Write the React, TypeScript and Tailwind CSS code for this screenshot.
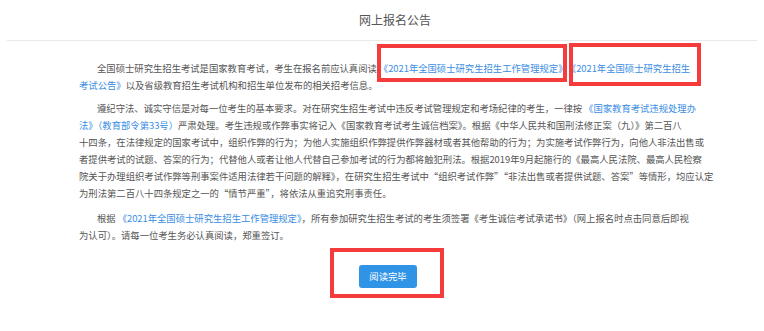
import React from 'react';

const Link = ({ children, className = '' }: { children: React.ReactNode; className?: string }) => (
  <span className={`text-[#3a8de3] ${className}`}>{children}</span>
);

const Line = ({ children, indent }: { children: React.ReactNode; indent?: boolean }) => (
  <div className={`whitespace-nowrap h-[17px] leading-[17px] ${indent ? 'pl-[18px]' : ''}`}>{children}</div>
);

const App = () => {
  return (
    <div
      className="relative w-[764px] h-[331px] overflow-hidden bg-white text-[#555555]"
      style={{ fontFamily: '"Noto Sans CJK SC", "Microsoft YaHei", sans-serif' }}
    >
      {/* Header */}
      <div className="mx-[7px] h-[41px] border-b border-[#e9e9e9] flex items-center justify-center pl-[26px]">
        <span className="text-[12px] text-[#555555]">网上报名公告</span>
      </div>

      {/* Body */}
      <div className="pl-[79px] w-[700px] pt-[19px] text-[9.33px]">
        <div className="mb-[6px]">
          <Line indent>
            全国硕士研究生招生考试是国家教育考试，考生在报名前应认真阅读
            <Link className="ml-[2px]">《2021年全国硕士研究生招生工作管理规定》</Link>
            <Link className="ml-[4px]">《2021年全国硕士研究生招生</Link>
          </Line>
          <Line>
            <Link>考试公告》</Link>以及省级教育招生考试机构和招生单位发布的相关招考信息。
          </Line>
        </div>

        <div className="mb-[8px]">
          <Line indent>
            遵纪守法、诚实守信是对每一位考生的基本要求。对在研究生招生考试中违反考试管理规定和考场纪律的考生，一律按
            <Link className="ml-[2px]">《国家教育考试违规处理办</Link>
          </Line>
          <Line>
            <Link>法》（教育部令第33号）</Link>
            严肃处理。考生违规或作弊事实将记入《国家教育考试考生诚信档案》。根据《中华人民共和国刑法修正案（九）》第二百八
          </Line>
          <Line>
            十四条，在法律规定的国家考试中，组织作弊的行为；为他人实施组织作弊提供作弊器材或者其他帮助的行为；为实施考试作弊行为，向他人非法出售或
          </Line>
          <Line>
            者提供考试的试题、答案的行为；代替他人或者让他人代替自己参加考试的行为都将触犯刑法。根据2019年9月起施行的《最高人民法院、最高人民检察
          </Line>
          <Line>
            院关于办理组织考试作弊等刑事案件适用法律若干问题的解释》，在研究生招生考试中“组织考试作弊”“非法出售或者提供试题、答案”等情形，均应认定
          </Line>
          <Line>为刑法第二百八十四条规定之一的“情节严重”，将依法从重追究刑事责任。</Line>
        </div>

        <div>
          <Line indent>
            根据<Link className="ml-[2px]">《2021年全国硕士研究生招生工作管理规定》</Link>
            ，所有参加研究生招生考试的考生须签署《考生诚信考试承诺书》（网上报名时点击同意后即视
          </Line>
          <Line>为认可）。请每一位考生务必认真阅读，郑重签订。</Line>
        </div>

        <div className="w-[618px] flex justify-center mt-[21px]">
          <button className="w-[58px] h-[23px] rounded-[3px] bg-[#2f93e6] text-white text-[9.33px] leading-none">
            阅读完毕
          </button>
        </div>
      </div>

      {/* Annotation boxes */}
      <div className="absolute left-[377px] top-[44px] w-[190px] h-[38px] border-[4px] border-[#f53b3b]" />
      <div className="absolute left-[569px] top-[43px] w-[132px] h-[43px] border-[4px] border-[#f53b3b]" />
      <div className="absolute left-[330px] top-[248px] w-[114px] h-[50px] border-[4px] border-[#f53b3b]" />
    </div>
  );
};

export default App;
